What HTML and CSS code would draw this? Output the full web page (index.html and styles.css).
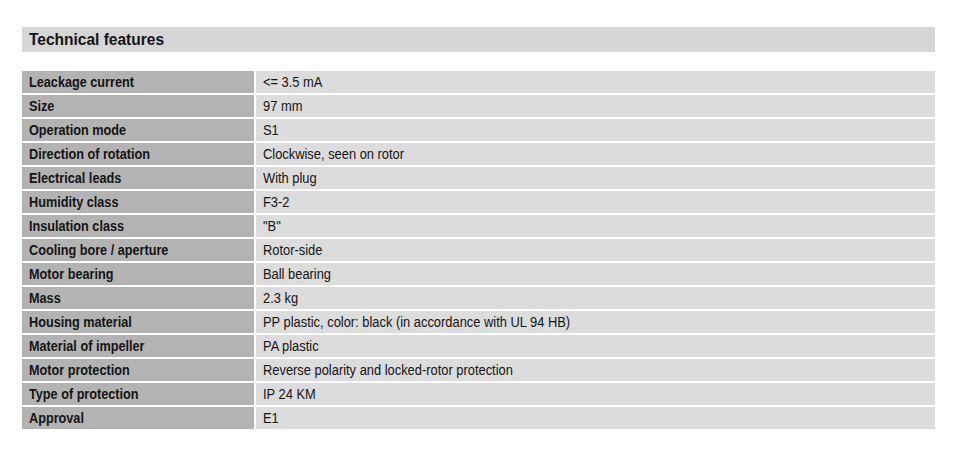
FILE: index.html
```html
<!DOCTYPE html>
<html lang="en">
<head>
<meta charset="utf-8">
<title>Technical features</title>
<link rel="stylesheet" href="styles.css">
</head>
<body>
<div class="page">
  <h2 class="title"><span class="txt">Technical features</span></h2>
  <table class="specs">
    <tr><th><span class="txt">Leackage current</span></th><td><span class="txt">&lt;= 3.5 mA</span></td></tr>
    <tr><th><span class="txt">Size</span></th><td><span class="txt">97 mm</span></td></tr>
    <tr><th><span class="txt">Operation mode</span></th><td><span class="txt">S1</span></td></tr>
    <tr><th><span class="txt">Direction of rotation</span></th><td><span class="txt">Clockwise, seen on rotor</span></td></tr>
    <tr><th><span class="txt">Electrical leads</span></th><td><span class="txt">With plug</span></td></tr>
    <tr><th><span class="txt">Humidity class</span></th><td><span class="txt">F3-2</span></td></tr>
    <tr><th><span class="txt">Insulation class</span></th><td><span class="txt">"B"</span></td></tr>
    <tr><th><span class="txt">Cooling bore / aperture</span></th><td><span class="txt">Rotor-side</span></td></tr>
    <tr><th><span class="txt">Motor bearing</span></th><td><span class="txt">Ball bearing</span></td></tr>
    <tr><th><span class="txt">Mass</span></th><td><span class="txt">2.3 kg</span></td></tr>
    <tr><th><span class="txt">Housing material</span></th><td><span class="txt">PP plastic, color: black (in accordance with UL 94 HB)</span></td></tr>
    <tr><th><span class="txt">Material of impeller</span></th><td><span class="txt">PA plastic</span></td></tr>
    <tr><th><span class="txt">Motor protection</span></th><td><span class="txt">Reverse polarity and locked-rotor protection</span></td></tr>
    <tr><th><span class="txt">Type of protection</span></th><td><span class="txt">IP 24 KM</span></td></tr>
    <tr><th><span class="txt">Approval</span></th><td><span class="txt">E1</span></td></tr>
  </table>
</div>
</body>
</html>
```
FILE: styles.css
```css
html, body { margin: 0; padding: 0; background: #fff; }
body {
  font-family: "Liberation Sans", Arial, sans-serif;
  color: #141414;
}
.page {
  padding: 27px 25px 0 22px;
}
.txt {
  display: inline-block;
  white-space: nowrap;
  transform-origin: left center;
}
.title {
  margin: 0;
  background: #d6d6d6;
  height: 25px;
  line-height: 25px;
  padding-left: 7px;
  font-size: 16.5px;
  font-weight: bold;
}
.title .txt { transform: scaleX(0.94); }
.specs {
  margin-top: 19px;
  width: 100%;
  border-collapse: separate;
  border-spacing: 0;
}
.specs th, .specs td {
  height: 22px;
  padding: 0 0 0 7px;
  font-size: 14px;
  text-align: left;
  vertical-align: middle;
  border-bottom: 2px solid #fff;
}
.specs th {
  width: 225px;
  background: #b3b3b3;
  font-weight: bold;
  border-right: 2px solid #fff;
}
.specs th .txt { transform: scaleX(0.905); }
.specs td {
  background: #dcdcdc;
  font-weight: normal;
}
.specs td .txt { transform: scaleX(0.92); }
```
